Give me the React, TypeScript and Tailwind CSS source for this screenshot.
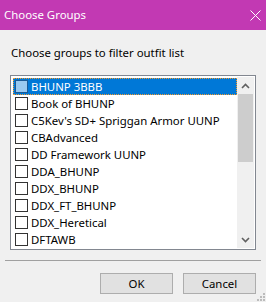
import React from "react";

const groups = [
  "BHUNP 3BBB",
  "Book of BHUNP",
  "C5Kev's SD+ Spriggan Armor UUNP",
  "CBAdvanced",
  "DD Framework UUNP",
  "DDA_BHUNP",
  "DDX_BHUNP",
  "DDX_FT_BHUNP",
  "DDX_Heretical",
  "DFTAWB",
];

export default function App() {
  return (
    <div
      className="relative w-[266px] h-[302px] bg-[#f0f0f0] flex flex-col overflow-hidden text-[11.4px] text-black"
      style={{ fontFamily: '"Segoe UI", "Noto Sans", "Liberation Sans", sans-serif' }}
    >
      {/* Title bar */}
      <div className="h-[30px] shrink-0 bg-[#c239b3] flex items-center justify-between pl-[4px] pr-[5px] text-white">
        <span className="leading-none">Choose Groups</span>
        <svg width="11" height="11" viewBox="0 0 11 11">
          <path d="M0.5 0.5 L10.5 10.5 M10.5 0.5 L0.5 10.5" stroke="white" strokeWidth="1" />
        </svg>
      </div>

      <div className="mt-[15px] ml-[11px] leading-[16px]">Choose groups to filter outfit list</div>

      {/* List box */}
      <div className="mt-[14px] ml-[10px] w-[246px] h-[175px] border border-[#828790] bg-white p-[1px] flex">
        <div className="flex-1 pl-[1px] pt-[1px] overflow-hidden">
          {groups.map((g, i) => {
            const sel = i === 0;
            return (
              <div
                key={g}
                className={
                  sel
                    ? "h-[17px] flex items-center bg-[#0078d7] text-white outline outline-1 outline-dotted outline-[#f39a2c] -outline-offset-1"
                    : "h-[17px] flex items-center"
                }
              >
                <span
                  className={
                    sel
                      ? "ml-[2px] w-[13px] h-[13px] shrink-0 border border-[#1a5a96] bg-[#99c9f0]"
                      : "ml-[2px] w-[13px] h-[13px] shrink-0 border border-[#333333] bg-white"
                  }
                />
                <span className="ml-[3px] whitespace-nowrap leading-none">{g}</span>
              </div>
            );
          })}
        </div>

        {/* Scrollbar */}
        <div className="w-[17px] bg-[#f0f0f0] flex flex-col">
          <div className="h-[17px] flex items-center justify-center">
            <svg width="9" height="6" viewBox="0 0 9 6">
              <path d="M1 5 L4.5 1.5 L8 5" stroke="#606060" strokeWidth="1.6" fill="none" />
            </svg>
          </div>
          <div className="mx-[1px] h-[68px] bg-[#cdcdcd]" />
          <div className="flex-1" />
          <div className="h-[17px] flex items-center justify-center">
            <svg width="9" height="6" viewBox="0 0 9 6">
              <path d="M1 1 L4.5 4.5 L8 1" stroke="#606060" strokeWidth="1.6" fill="none" />
            </svg>
          </div>
        </div>
      </div>

      {/* Separator */}
      <div className="mt-[10px] mx-[5px] h-[1px] bg-[#a0a0a0]" />

      {/* Buttons */}
      <div className="mt-[12px] flex justify-end gap-[10px] pr-[10px]">
        <button className="w-[73px] h-[21px] bg-[#e1e1e1] border border-[#adadad] leading-none">OK</button>
        <button className="w-[73px] h-[21px] bg-[#e1e1e1] border border-[#adadad] leading-none">Cancel</button>
      </div>

      {/* Resize grip */}
      <svg width="8" height="8" viewBox="0 0 8 8" className="absolute right-[1px] bottom-[1px]">
        <rect x="6" y="0" width="2" height="2" fill="#bcbcbc" />
        <rect x="3" y="3" width="2" height="2" fill="#bcbcbc" />
        <rect x="6" y="3" width="2" height="2" fill="#bcbcbc" />
        <rect x="0" y="6" width="2" height="2" fill="#bcbcbc" />
        <rect x="3" y="6" width="2" height="2" fill="#bcbcbc" />
        <rect x="6" y="6" width="2" height="2" fill="#bcbcbc" />
      </svg>
    </div>
  );
}
